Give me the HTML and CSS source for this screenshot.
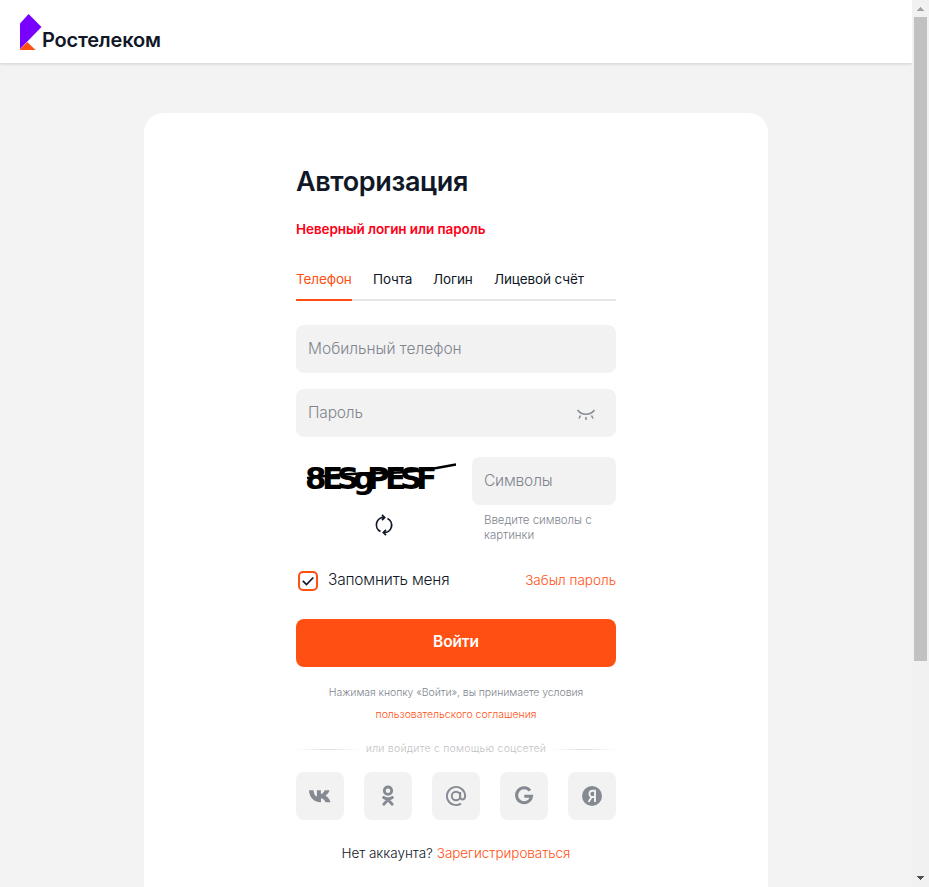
FILE: index.html
```html
<!DOCTYPE html>
<html lang="ru">
<head>
<meta charset="utf-8">
<title>Ростелеком</title>
<link rel="stylesheet" href="styles.css">
</head>
<body>
<div class="page">
  <header class="header">
    <svg class="logo-mark" width="22" height="36" viewBox="0 0 22 36"><path fill="#7700ff" d="M0 9.5 8.6 0 21.5 13 0 35z"/><path fill="#ff4f12" d="M7.3 28 15.5 36H0v-.8z"/></svg>
    <span class="logo-text">Ростелеком</span>
  </header>
  <main class="card">
    <div class="form">
      <h1 class="title"><span>Авторизация</span></h1>
      <p class="error">Неверный логин или пароль</p>
      <nav class="tabs">
        <span class="tab tab-active">Телефон</span>
        <span class="tab tab-mail">Почта</span>
        <span class="tab tab-login">Логин</span>
        <span class="tab tab-account">Лицевой счёт</span>
      </nav>
      <div class="field field-phone"><span>Мобильный телефон</span></div>
      <div class="field field-password"><span>Пароль</span>
        <svg class="eye" width="20" height="14" viewBox="0 0 20 14" fill="none" stroke="#858992" stroke-width="1.5"><path d="M1.5 2c4.5 5.8 12.500 5.800 17 0M4.500 7.500 3 10.500M10 9v3M15.500 7.500l1.500 3"/></svg>
      </div>
      <div class="captcha">
        <div class="captcha-left">
          <svg width="160" height="48" viewBox="0 0 160 48">
            <text class="captcha-code" y="32" x="9 26 41 57 71 89 104 120">8ESgPESF</text>
            <path d="M11 21Q54 16 86 16T160 7.500" fill="none" stroke="#000" stroke-width="2.500"/>
          </svg>
          <svg class="refresh" width="20" height="22" viewBox="0 0 20 22" fill="none" stroke="#101828" stroke-width="1.700"><path d="M6.500 17.500A7.400 7.400 0 0 1 10.500 3.500M13.500 4.500A7.400 7.400 0 0 1 9.500 18.500M8 .8l2.700 2.700L8 6.200M12 15.800l-2.700 2.700 2.700 2.700"/></svg>
        </div>
        <div class="captcha-right">
          <div class="field field-symbols"><span>Символы</span></div>
          <p class="hint">Введите символы с<br>картинки</p>
        </div>
      </div>
      <div class="options">
        <span class="checkbox"><svg width="12" height="10" viewBox="0 0 12 10" fill="none" stroke="#101828" stroke-width="1.700"><path d="m.8 4.800 3.700 3.700L11.300 1.500"/></svg></span>
        <span class="remember">Запомнить меня</span>
        <a class="forgot">Забыл пароль</a>
      </div>
      <div class="submit"><span>Войти</span></div>
      <p class="terms"><span class="terms-line">Нажимая кнопку «Войти», вы принимаете условия</span><br><a>пользовательского соглашения</a></p>
      <div class="divider"><i></i><span>или войдите с помощью соцсетей</span><i></i></div>
      <div class="socials">
        <div class="social"><svg width="24" height="24" viewBox="0 0 24 24"><path fill="#858992" d="M13 18.200C5.500 18.200 1.300 13.200 1 6.300h4.500c.2 4 1.900 5.800 3.400 6.200V6.300h4v3.800c1.500-.2 3.200-1.900 3.800-3.800h4.800c-.6 2.400-2.400 4.400-4.100 5.500 1.800.8 4 2.700 5.100 6.400h-5c-.8-2-2.400-3.700-4.500-3.900v3.900z"/></svg></div>
        <div class="social"><svg width="24" height="24" viewBox="0 0 24 24" fill="none" stroke="#858992" stroke-width="2.800"><circle cx="12" cy="6.700" r="3.700"/><path stroke-linecap="round" d="M7.600 13.500q4.400 2.600 8.800 0M12 15.800l-4.200 4.500M12 15.800l4.200 4.500"/></svg></div>
        <div class="social"><svg width="24" height="24" viewBox="0 0 24 24" fill="none" stroke="#858992" stroke-width="1.900"><circle cx="12" cy="12" r="4.200"/><path d="M16.200 8v5c0 3.500 4.900 3.500 4.900-1A9.100 9.100 0 1 0 17 19.600"/></svg></div>
        <div class="social"><svg width="24" height="24" viewBox="0 0 24 24" fill="none" stroke="#858992" stroke-width="3"><path d="M18 6.700A7.500 7.500 0 1 0 19.500 12.300H12.300"/></svg></div>
        <div class="social"><svg width="24" height="24" viewBox="0 0 24 24"><circle cx="12" cy="12" r="10" fill="#858992"/><path fill="none" stroke="#f3f3f3" stroke-width="1.900" d="M15 18V6.700h-2.300c-4.300 0-4.300 6.300 0 6.300H15M11.700 13 8.500 18"/></svg></div>
      </div>
      <p class="register"><span>Нет аккаунта?</span><a>Зарегистрироваться</a></p>
    </div>
  </main>
</div>
<div class="scrollbar">
  <svg width="17" height="17" viewBox="0 0 17 17"><path fill="#a3a3a3" d="M8 7h1v1h1v1h1v1h1v1H5v-1h1V9h1V8h1z"/></svg>
  <div class="thumb"></div>
  <svg width="17" height="17" viewBox="0 0 17 17"><path fill="#505050" d="M5 6h7v1h-1v1h-1v1H9v1H8V9H7V8H6V7H5z"/></svg>
</div>
</body>
</html>
```
FILE: styles.css
```css
* { box-sizing: border-box; }
html, body { margin: 0; height: 100%; overflow: hidden; }
body { display: flex; background: #f3f3f4; color: #101828; font-family: Inter, "Liberation Sans", sans-serif; }
p, h1 { margin: 0; }
.page { width: 912px; height: 887px; overflow: hidden; }
.header { height: 63px; display: flex; background: #fff; padding: 14px 0 0 20px; box-shadow: 0 1px 3px rgba(16, 24, 40, .16); }
.logo-text { margin-left: 0; padding-top: 14px; font-size: 20px; line-height: 24px; font-weight: 600; letter-spacing: -.2px; }
.card { width: 624px; height: 900px; margin: 50px auto 0; background: #fff; border-radius: 20px; }
.form { width: 320px; margin: 0 auto; padding-top: 52px; }
.title { font-size: 27px; line-height: 34px; font-weight: 600; letter-spacing: -.37px; white-space: nowrap; }
.error { margin-top: 20px; color: #ff0015; font-size: 13.5px; line-height: 20px; font-weight: 600; letter-spacing: -.08px; white-space: nowrap; }
.tabs { display: flex; height: 32px; margin-top: 30px; border-bottom: 2px solid #e6e6e6; font-size: 13.5px; line-height: 20px; letter-spacing: -.12px; white-space: nowrap; }
.tab { height: 32px; }
.tab-active { width: 56px; margin-right: 21px; color: #ff4f12; border-bottom: 2px solid #ff4f12; }
.tab-mail { width: 60px; }
.tab-login { width: 61px; }
.field { height: 48px; display: flex; align-items: center; justify-content: space-between; padding: 0 20px 0 12px; border-radius: 8px; background: #f2f2f2; color: #80858e; font-size: 15.5px; font-weight: 300; white-space: nowrap; }
.field > span { padding-bottom: 1px; }
.field-phone { margin-top: 24px; }
.field-password, .field-symbols { letter-spacing: -.18px; }
.field-password { margin-top: 16px; }
.eye { margin-top: 3px; }
.captcha { display: flex; justify-content: space-between; margin-top: 20px; height: 90px; }
.captcha-left { width: 160px; display: flex; flex-direction: column; }
.captcha-code { font-family: "DejaVu Sans", sans-serif; font-size: 31px; font-weight: 700; }
.refresh { margin: 9px 0 0 78px; }
.captcha-right { width: 144px; }
.hint { margin: 8px 0 0 12px; color: #80858e; font-size: 11.5px; line-height: 15px; font-weight: 300; letter-spacing: -.06px; }
.options { display: flex; height: 24px; margin-top: 22px; align-items: center; white-space: nowrap; }
.checkbox { width: 20px; height: 20px; margin-left: 2px; display: flex; align-items: center; justify-content: center; border: 2px solid #ff4f12; border-radius: 5px; }
.remember { margin: -3px 0 0 10px; font-size: 15.5px; font-weight: 300; letter-spacing: -.2px; }
.forgot { margin: -2px 0 0 auto; color: #ff4f12; font-size: 13.5px; font-weight: 300; }
.submit { height: 48px; margin-top: 26px; display: flex; align-items: center; justify-content: center; padding-bottom: 3px; border-radius: 8px; background: #ff4f12; color: #fff; font-size: 15.5px; font-weight: 600; letter-spacing: -.1px; }
.terms { margin-top: 15px; text-align: center; color: #80858e; font-size: 10.5px; line-height: 22px; font-weight: 300; white-space: nowrap; }
.terms-line { letter-spacing: -.07px; }
.terms a { color: #ff4f12; }
.divider { display: flex; align-items: center; justify-content: space-between; height: 14px; margin-top: 16px; color: #c2c2c4; font-size: 10.5px; font-weight: 300; letter-spacing: .22px; white-space: nowrap; }
.divider span { padding-bottom: 1px; }
.divider i { width: 64px; height: 1px; background: linear-gradient(to right, #fff, #dedee0, #fff); }
.socials { display: flex; justify-content: space-between; margin-top: 16px; }
.social { width: 48px; height: 48px; display: flex; align-items: center; justify-content: center; border-radius: 8px; background: #f2f2f2; }
.register { display: flex; justify-content: center; gap: 4px; margin-top: 23px; font-size: 13.5px; line-height: 20px; font-weight: 300; letter-spacing: -.05px; white-space: nowrap; }
.register a { color: #ff4f12; }
.scrollbar { width: 17px; height: 887px; display: flex; flex-direction: column; background: #f1f1f1; }
.thumb { width: 13px; height: 644px; margin: 0 2px 209px; background: #c1c1c1; }
```
